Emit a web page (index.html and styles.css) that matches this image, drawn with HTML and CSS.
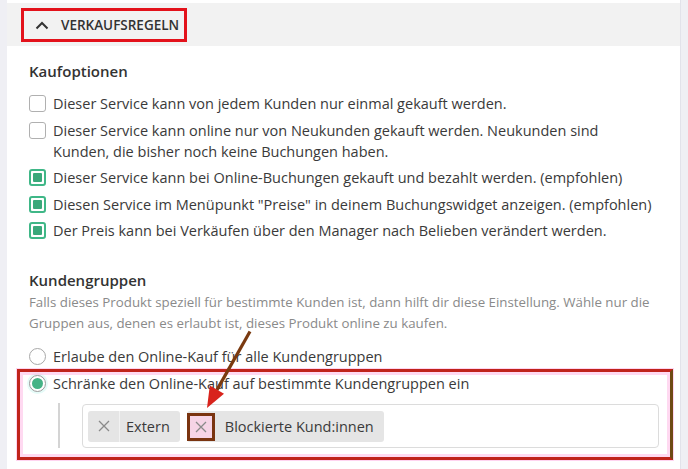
FILE: index.html
```html
<!DOCTYPE html>
<html lang="de">
<head>
<meta charset="utf-8">
<link rel="stylesheet" href="styles.css">
</head>
<body>
<div class="card">
  <div class="header">
    <button class="toggle">
      <svg class="chev" width="14" height="9" viewBox="0 0 14 9"><path d="M1.5 7.5 L7 2 L12.5 7.5" fill="none" stroke="#333" stroke-width="2"/></svg>
      <span>VERKAUFSREGELN</span>
    </button>
  </div>
  <div class="content">
    <h3 class="title">Kaufoptionen</h3>
    <ul class="checks">
      <li><span class="cb"></span><span>Dieser Service kann von jedem Kunden nur einmal gekauft werden.</span></li>
      <li><span class="cb"></span><span>Dieser Service kann online nur von Neukunden gekauft werden. Neukunden sind Kunden, die bisher noch keine Buchungen haben.</span></li>
      <li><span class="cb on"></span><span>Dieser Service kann bei Online-Buchungen gekauft und bezahlt werden. (empfohlen)</span></li>
      <li><span class="cb on"></span><span>Diesen Service im Menüpunkt "Preise" in deinem Buchungswidget anzeigen. (empfohlen)</span></li>
      <li><span class="cb on"></span><span>Der Preis kann bei Verkäufen über den Manager nach Belieben verändert werden.</span></li>
    </ul>
    <h3 class="title title2">Kundengruppen</h3>
    <p class="desc">Falls dieses Produkt speziell für bestimmte Kunden ist, dann hilft dir diese Einstellung. Wähle nur die Gruppen aus, denen es erlaubt ist, dieses Produkt online zu kaufen.</p>
    <div class="radios">
      <div class="radio-row"><span class="rb"></span><span>Erlaube den Online-Kauf für alle Kundengruppen</span></div>
      <div class="group">
        <div class="radio-row"><span class="rb on"></span><span>Schränke den Online-Kauf auf bestimmte Kundengruppen ein</span></div>
        <div class="nested">
          <div class="vline"></div>
          <div class="tags">
            <span class="chip"><span class="x"><svg width="12" height="12" viewBox="0 0 12 12"><path d="M1 1 L11 11 M11 1 L1 11" stroke="#8a8a8a" stroke-width="1.3"/></svg></span><span class="lbl">Extern</span></span>
            <span class="chip"><span class="x marked"><svg width="12" height="12" viewBox="0 0 12 12"><path d="M1 1 L11 11 M11 1 L1 11" stroke="#8a8a8a" stroke-width="1.3"/></svg></span><span class="lbl">Blockierte Kund:innen</span></span>
          </div>
        </div>
        <div class="annot"></div>
      </div>
      <svg class="arrow" width="60" height="90" viewBox="0 0 60 90">
        <line x1="52" y1="1.5" x2="18.8" y2="60.1" stroke="#7a3a10" stroke-width="3.2"/>
        <polygon points="9,78 11.8,55.5 26,63.8" fill="#d8231c"/>
      </svg>
    </div>
  </div>
</div>
</body>
</html>
```
FILE: styles.css
```css
* { box-sizing: border-box; }
html, body { margin: 0; padding: 0; }
body {
  background: #efeff4;
  font-family: "Open Sans", "DejaVu Sans", sans-serif;
  color: #3a3a3a;
  width: 688px;
  height: 469px;
  overflow: hidden;
}
.card {
  margin-left: 7px;
  width: 674px;
  height: 469px;
  background: #fff;
  padding-top: 3px;
  border-right: 1px solid #e2e2ea;
}
.header {
  height: 43px;
  background: #f2f2f2;
  padding: 5px 0 0 14px;
}
.toggle {
  display: flex;
  align-items: center;
  width: 166px;
  height: 34px;
  border: 3px solid #e3121b;
  background: transparent;
  padding: 0 0 0 11px;
  font-family: inherit;
  font-size: 13.5px;
  font-weight: 600;
  color: #333;
  cursor: pointer;
}
.chev { margin-right: 12px; }
.content {
  padding: 15px 0 0 22px;
  position: relative;
}
.title {
  margin: 0;
  font-size: 15px;
  line-height: 21px;
  font-weight: 600;
  color: #333;
}
.checks {
  list-style: none;
  margin: 11px 0 0;
  padding: 0;
  display: flex;
  flex-direction: column;
  gap: 5.5px;
  width: 627px;
}
.checks li {
  display: flex;
  align-items: flex-start;
  gap: 7px;
  font-size: 14.5px;
  line-height: 21px;
}
.cb {
  flex: none;
  width: 17px;
  height: 17px;
  margin-top: 2px;
  border: 1.5px solid #b0b0b0;
  border-radius: 3px;
  background: #fff;
}
.cb.on {
  border: 2px solid #3fb787;
  padding: 2px;
  background: #fff;
}
.cb.on::after {
  content: "";
  display: block;
  width: 100%;
  height: 100%;
  background: #3aa87a;
  border-radius: 1px;
}
.title2 { margin-top: 29px; }
.desc {
  margin: 1px 0 0;
  font-size: 13.3px;
  line-height: 21px;
  color: #8a8a8a;
  width: 640px;
}
.radios {
  margin-top: 12px;
  position: relative;
}
.radio-row {
  display: flex;
  align-items: center;
  gap: 7px;
  font-size: 14.5px;
  line-height: 21px;
}
.rb {
  flex: none;
  width: 17px;
  height: 17px;
  border: 1.5px solid #a8a8a8;
  border-radius: 50%;
  background: #fff;
}
.rb.on {
  border-color: #9a9a9a;
  padding: 2px;
  box-shadow: 0 0 0 2px #e6fbf8;
}
.rb.on::after {
  content: "";
  display: block;
  width: 100%;
  height: 100%;
  border-radius: 50%;
  background: #45b386;
}
.group {
  margin-top: 6px;
  position: relative;
}
.nested {
  display: flex;
  margin-top: 9.5px;
  padding-left: 29px;
  gap: 22px;
}
.vline {
  width: 2px;
  height: 45px;
  background: #d4d4d4;
  margin-top: -1px;
}
.tags {
  width: 577px;
  height: 44px;
  border: 1px solid #dcdcdc;
  border-radius: 4px;
  padding: 6px 5px;
  display: flex;
  gap: 7px;
}
.chip {
  display: flex;
  align-items: stretch;
  height: 31px;
  background: #e5e5e5;
  border-radius: 3px;
  font-size: 14.5px;
  color: #3a3a3a;
}
.chip .x {
  width: 32px;
  display: flex;
  align-items: center;
  justify-content: center;
  border-right: 1px solid #f2f2f2;
}
.chip .x.marked {
  width: 28px;
  margin-right: 4px;
  border: 3px solid #7a3410;
  background: #f6d4e6;
  margin-top: 2px;
  height: 28px;
}
.chip .lbl {
  display: flex;
  align-items: center;
  padding: 0 10px 0 6px;
}
.annot {
  position: absolute;
  left: -12px;
  top: -4px;
  width: 656px;
  height: 91px;
  border: 3px solid #c0231b;
  border-right-color: #6e4a14;
  box-shadow: inset 0 0 0 3px rgba(255, 170, 225, 0.45), 0 0 0 1px rgba(255, 170, 225, 0.5);
  pointer-events: none;
}
.arrow {
  position: absolute;
  left: 169px;
  top: -16px;
}
```
